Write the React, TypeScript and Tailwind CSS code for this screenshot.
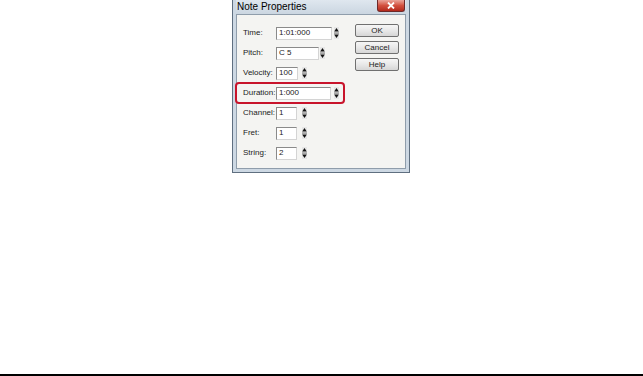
import React from 'react';

const font = { fontFamily: '"Liberation Sans", Arial, sans-serif' };

type Field = { label: string; value: string; w: string; gap: string; highlight?: boolean };

const fields: Field[] = [
  { label: 'Time:', value: '1:01:000', w: 'w-[56px]', gap: 'ml-[2px]' },
  { label: 'Pitch:', value: 'C 5', w: 'w-[43px]', gap: 'ml-[1px]' },
  { label: 'Velocity:', value: '100', w: 'w-[22px]', gap: 'ml-[4px]' },
  { label: 'Duration:', value: '1:000', w: 'w-[55px]', gap: 'ml-[3px]', highlight: true },
  { label: 'Channel:', value: '1', w: 'w-[21px]', gap: 'ml-[5px]' },
  { label: 'Fret:', value: '1', w: 'w-[21px]', gap: 'ml-[5px]' },
  { label: 'String:', value: '2', w: 'w-[21px]', gap: 'ml-[5px]' },
];

function Spin() {
  return (
    <svg width="5" height="12" viewBox="0 0 5 12" className="shrink-0 block">
      <rect x="0" y="0" width="5" height="12" fill="#e6e6e6" />
      <path d="M2.5 1 L4.8 4.6 L0.2 4.6 Z" fill="#111" />
      <rect x="0" y="5.6" width="5" height="0.9" fill="#666" />
      <path d="M0.2 7.4 L4.8 7.4 L2.5 11 Z" fill="#111" />
    </svg>
  );
}

function Row({ f }: { f: Field }) {
  return (
    <div className="relative flex items-center h-[20px]">
      {f.highlight && (
        <div className="absolute left-[-8px] top-[-1px] w-[110px] h-[22px] rounded-[4px] border-2 border-[#c8142c]" />
      )}
      <span className="w-[33px] text-[8px] text-[#222] leading-none whitespace-nowrap">{f.label}</span>
      <div
        className={`${f.w} h-[13px] bg-white border border-[#8a8a8a] border-b-[#d4d4d4] border-r-[#d4d4d4] flex items-center pl-[2px] text-[8px] leading-none text-[#222]`}
      >
        {f.value}
      </div>
      <div className={f.gap}>
        <Spin />
      </div>
    </div>
  );
}

function Btn({ children }: { children: React.ReactNode }) {
  return (
    <div className="h-[13px] w-[44px] rounded-[2px] border border-[#707070] bg-gradient-to-b from-[#f6f6f6] via-[#e8e8e8] to-[#d6d6d6] flex items-center justify-center text-[8px] leading-none text-[#222]">
      {children}
    </div>
  );
}

export default function App() {
  return (
    <div className="w-[643px] h-[376px] bg-white flex flex-col" style={font}>
      <div className="flex-1 pl-[232px]">
        <div className="w-[178px] h-[173px] border border-t-0 border-[#5f6f80] bg-[#cdd8e3] flex flex-col px-[3px] pb-[3px]">
          <div className="h-[14px] flex items-start justify-between bg-gradient-to-b from-[#dfe7ef] to-[#cbd6e1]">
            <span className="text-[10px] leading-none text-black pt-[2px] pl-[1px]">Note Properties</span>
            <div className="w-[28px] h-[12px] mr-[1px] rounded-b-[3px] border border-t-0 border-[#6d2a2a] bg-gradient-to-b from-[#e9a49a] via-[#d2503f] to-[#b3281c] flex items-center justify-center">
              <svg width="8" height="7" viewBox="0 0 8 7">
                <path d="M1 0.5 L7 6.5 M7 0.5 L1 6.5" stroke="#fff" strokeWidth="1.8" />
              </svg>
            </div>
          </div>
          <div className="flex-1 border border-[#8f9dab] bg-[#f4f4f2] flex pt-[8px] pl-[6px] pr-[6px]">
            <div className="flex-1 flex flex-col">
              {fields.map((f) => (
                <Row key={f.label} f={f} />
              ))}
            </div>
            <div className="flex flex-col gap-[4px] pt-[1px]">
              <Btn>OK</Btn>
              <Btn>Cancel</Btn>
              <Btn>Help</Btn>
            </div>
          </div>
        </div>
      </div>
      <div className="h-[2px] bg-black" />
    </div>
  );
}
